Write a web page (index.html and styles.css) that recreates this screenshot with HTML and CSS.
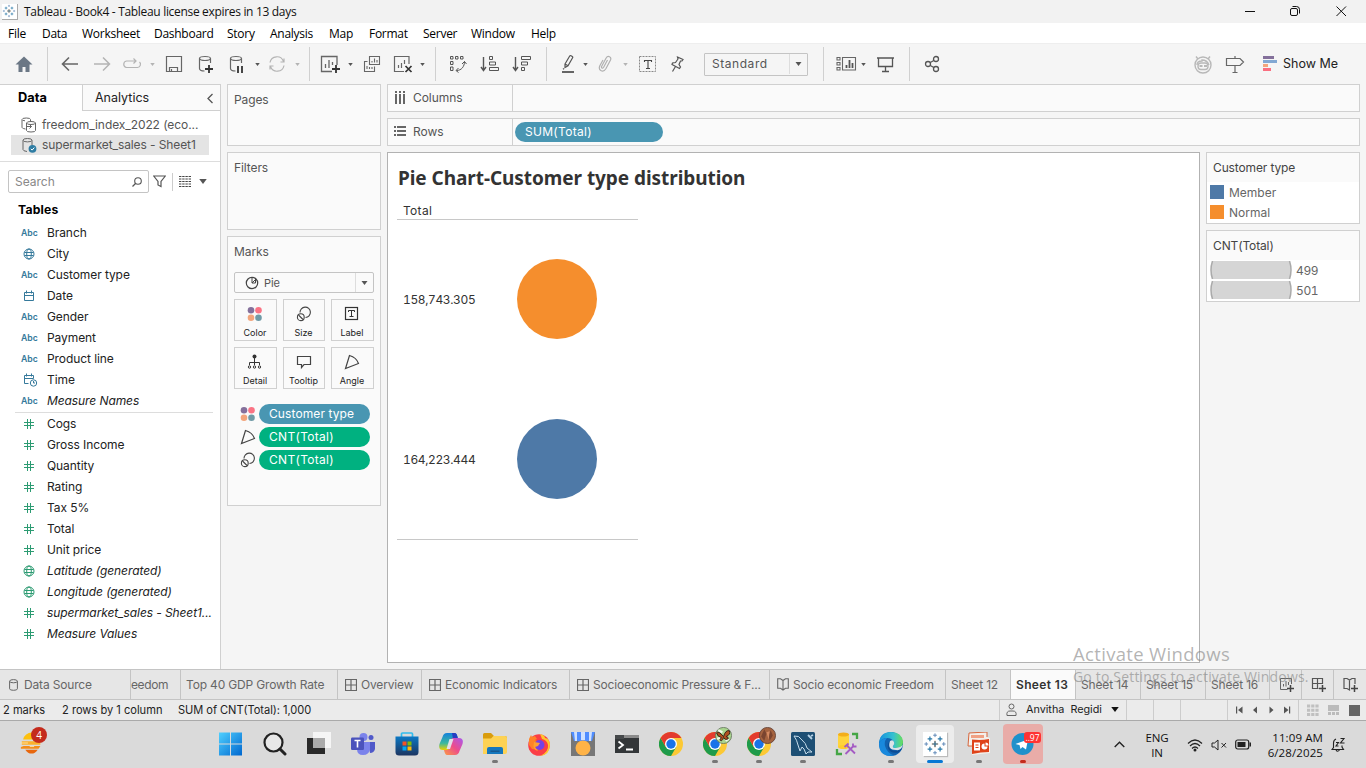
FILE: index.html
```html
<!DOCTYPE html>
<html lang="en">
<head>
<meta charset="utf-8">
<title>Tableau - Book4</title>
<link rel="stylesheet" href="styles.css">
</head>
<body>
<svg class="defs" width="0" height="0">
  <symbol id="tableau" viewBox="0 0 26 26"><path d="M13 9.500v7M9.500 13h7" stroke="#e0803a" stroke-width="1.300"/><path d="M13 1.500v4M11 3.500h4M13 20.500v4M11 22.500h4M1.500 13h4M3.500 11v4M20.500 13h4M22.500 11v4" stroke="#5b86b5" stroke-width="1"/><path d="M7.500 5v5M5 7.500h5M18.500 5v5M16 7.500h5M7.500 16v5M5 18.500h5M18.500 16v5M16 18.500h5M13 10v6M10 13h6" stroke="#2878a8" stroke-width="1.300"/></symbol>
  <symbol id="caret" viewBox="0 0 6 4"><path d="M0 0h6L3 4z" fill="currentColor"/></symbol>
  <symbol id="globe" viewBox="0 0 12 12"><g fill="none" stroke="currentColor"><circle cx="6" cy="6" r="5"/><ellipse cx="6" cy="6" rx="2.300" ry="5"/><path d="M1.500 4.500h9M1.500 7.500h9"/></g></symbol>
  <symbol id="hash" viewBox="0 0 12 12"><path d="M4.500 1v10M7.500 1v10M1 4.500h10M1 7.500h10" fill="none" stroke="currentColor"/></symbol>
  <symbol id="cyl" viewBox="0 0 14 18"><path d="M12.500 8V3.500M1.500 3.500v10c0 1.500 2 2.500 5 2.500" fill="none" stroke="currentColor" stroke-width="1.200"/><ellipse cx="7" cy="3.500" rx="5.500" ry="2" fill="none" stroke="currentColor" stroke-width="1.200"/></symbol>
  <symbol id="dots" viewBox="0 0 16 16"><circle cx="4" cy="4.200" r="3.300" fill="#84709b"/><circle cx="11.500" cy="4.200" r="3.300" fill="#fa7384"/><circle cx="4" cy="11.700" r="3.300" fill="#f2a57c"/><circle cx="11.500" cy="11.700" r="3.300" fill="#6f9aa6"/></symbol>
  <symbol id="size" viewBox="0 0 16 16"><g fill="none" stroke="#444" stroke-width="1.100"><path d="M4 6.500A5.200 5.200 0 1 1 9.500 11.500"/><circle cx="4.800" cy="11.200" r="3.400"/><path d="M2.500 9l4.500 4.500"/></g></symbol>
  <symbol id="angle" viewBox="0 0 16 16"><path d="M5.500 1.500L1.500 14.500L14.500 9.500Q12.500 3.500 5.500 1.500z" fill="none" stroke="#444" stroke-width="1.200"/></symbol>
  <symbol id="grid" viewBox="0 0 12 12"><path d="M.5.500h11v11H.5zM6 .5v11M.5 6h11" fill="none" stroke="currentColor" stroke-width="1.200"/></symbol>
  <symbol id="book" viewBox="0 0 12 13"><path d="M.7.700h2.800L6 2.500 8.500.700h2.800v9.600H8.500L6 12 3.500 10.300H.7zM6 2.500V12" fill="none" stroke="currentColor" stroke-width="1.100"/></symbol>
  <symbol id="chrome" viewBox="0 0 24 24"><circle cx="12" cy="12" r="12" fill="#fcc934"/><path d="M1.600 6A12 12 0 0 0 12 24L17.200 15H6.800z" fill="#1e9b4b"/><path d="M1.600 6A12 12 0 0 1 22.400 6H12L6.800 15z" fill="#e33b2e"/><circle cx="12" cy="12" r="6" fill="#fff"/><circle cx="12" cy="12" r="4.700" fill="#1a73e8"/></symbol>
</svg>

<header class="titlebar">
  <span class="app-logo"><svg width="14" height="14"><use href="#tableau"/></svg></span>
  <span class="title">Tableau - Book4 - Tableau license expires in 13 days</span>
  <svg class="win-buttons" width="104" height="22" viewBox="0 0 104 22"><g fill="none" stroke="#111"><path d="M0 10.500h10M91.500 5.500l9.500 9.500M101 5.500L91.500 15"/><rect x="45.500" y="7.500" width="7" height="7" rx="1.500"/><path d="M47.500 5.500h4a3 3 0 0 1 3 3v4"/></g></svg>
</header>

<nav class="menubar">
  <span>File</span><span>Data</span><span>Worksheet</span><span>Dashboard</span><span>Story</span><span>Analysis</span><span>Map</span><span>Format</span><span>Server</span><span>Window</span><span>Help</span>
</nav>

<div class="toolbar">
  <svg width="18" height="18" viewBox="0 0 18 18"><path d="M9 1.500L.5 9.500h3V17h4v-5h3v5h4V9.500h3z" fill="#6b7785"/></svg>
  <i class="sep first"></i>
  <svg width="18" height="16" viewBox="0 0 18 16"><path d="M17 8H2M8 1.500L1.500 8 8 14.500" fill="none" stroke="#666" stroke-width="1.600"/></svg>
  <svg width="18" height="16" viewBox="0 0 18 16"><path d="M1 8h15M10 1.500L16.500 8 10 14.500" fill="none" stroke="#b4b4b4" stroke-width="1.500"/></svg>
  <svg width="20" height="12" viewBox="0 0 20 12"><path d="M13.500 3H4.500a3.300 3.300 0 0 0 0 6.500h11a3.200 3.200 0 0 0 2-5.500M11.500.500L14 3l-2.500 2.500" fill="none" stroke="#b4b4b4" stroke-width="1.200"/></svg>
  <svg class="caret off"><use href="#caret"/></svg>
  <svg width="18" height="18" viewBox="0 0 18 18"><path d="M1.500 1.500h15v15h-15zM4.500 16.500v-4h8v4M6.500 16v-2" fill="none" stroke="#666" stroke-width="1.200"/></svg>
  <svg width="18" height="20" viewBox="0 0 18 20"><use href="#cyl" x="1" y="1" width="14" height="18" color="#666"/><path d="M12 11v8M8 15h8" stroke="#333" stroke-width="1.800"/></svg>
  <svg width="18" height="20" viewBox="0 0 18 20"><use href="#cyl" x="1" y="1" width="14" height="18" color="#666"/><path d="M10 12v7M14 12v7" stroke="#333" stroke-width="1.800"/></svg>
  <svg class="caret"><use href="#caret"/></svg>
  <svg width="18" height="18" viewBox="0 0 18 18"><path d="M2 7.500a7 7 0 0 1 13.500-1M16 10.500a7 7 0 0 1-13.500 1M12.500 7h3.500V3.500M5.500 11H2v3.500" fill="none" stroke="#b4b4b4" stroke-width="1.200"/></svg>
  <svg class="caret off"><use href="#caret"/></svg>
  <i class="sep"></i>
  <svg width="22" height="20" viewBox="0 0 22 20"><path d="M17 11V2.500H1.500v15H12M5.500 14v-4M9 14V6M12.500 11V8" fill="none" stroke="#666" stroke-width="1.300"/><path d="M16 11v8M12 15h8" stroke="#333" stroke-width="1.800"/></svg>
  <svg class="caret"><use href="#caret"/></svg>
  <svg width="18" height="18" viewBox="0 0 18 18"><path d="M6.500 1.500h10v8h-10zM4.500 6.500h-3v10h10v-5M9 7.500V6M11.500 7.500v-4M14 7.500V5M4 14v-3M6.500 14v-2M9 14v-2" fill="none" stroke="#666" stroke-width="1.100"/></svg>
  <svg width="20" height="20" viewBox="0 0 20 20"><path d="M16 10V2.500H1.500v15H11M5.500 14v-3M8.500 14V9M11.500 10V6" fill="none" stroke="#666" stroke-width="1.200"/><path d="M12.500 12l6 6M18.500 12l-6 6" stroke="#333" stroke-width="1.700"/></svg>
  <svg class="caret"><use href="#caret"/></svg>
  <i class="sep"></i>
  <svg width="18" height="18" viewBox="0 0 18 18"><path d="M1.500 1.500h2.500v2.500H1.500zM6.500 1.500h2.500v2.500H6.500zM11.500 1.500h2.500v2.500h-2.500zM1.500 6.500h2.500v3H1.500zM1.500 12h2.500v3.500H1.500zM15.500 6.500c0 5-3 9-8 9M13 9l2.500-2.500L17.500 9M9.500 13L7 15.500 9.500 17.500" fill="none" stroke="#555"/></svg>
  <svg width="20" height="18" viewBox="0 0 20 18"><path d="M3.500 2v13M1 12l2.500 3.500L6 12" fill="none" stroke="#555" stroke-width="1.400"/><path d="M9.500 1.500h3v3h-3zM9.500 7h6v3h-6zM9.500 12.500h9v3h-9z" fill="none" stroke="#555"/></svg>
  <svg width="20" height="18" viewBox="0 0 20 18"><path d="M3.500 2v13M1 12l2.500 3.500L6 12" fill="none" stroke="#555" stroke-width="1.400"/><path d="M9.500 1.500h9v3h-9zM9.500 7h6v3h-6zM9.500 12.500h3v3h-3z" fill="none" stroke="#555"/></svg>
  <i class="sep"></i>
  <svg width="14" height="20" viewBox="0 0 14 20"><path d="M4 10L8.700 2q.5-.8 1.300-.3l1.300.8q.8.500.3 1.300L7 11.800 4 13.500zM4 10l3 1.800M3 14.500l-1 .8" fill="none" stroke="#555" stroke-width="1.200"/><path d="M1 18h12" stroke="#555" stroke-width="1.800"/></svg>
  <svg class="caret"><use href="#caret"/></svg>
  <svg width="14" height="18" viewBox="0 0 14 18"><path d="M9.500 5L5.500 12.500q-.8 1-1.600.4t-.2-1.700L8 3.200Q9.500.700 11.500 1.700t1 3.300L8 13.500Q6 17 3.200 15.700T1.700 11L5 5" fill="none" stroke="#b0b0b0" stroke-width="1.200"/></svg>
  <svg class="caret off"><use href="#caret"/></svg>
  <svg width="18" height="17" viewBox="0 0 18 17"><rect x=".5" y=".5" width="16" height="15" fill="none" stroke="#888" stroke-dasharray="2 1"/><path d="M5.500 6V4.500h7V6M9 4.500v8M7 12.500h4" fill="none" stroke="#444" stroke-width="1.100"/></svg>
  <svg width="14" height="18" viewBox="0 0 14 18"><path d="M7.500 2l5.500 2.500-1 1.500H10.500L9 9.500l1.500 2.500-1 1.500L2 9.500l.5-1.500L5.500 7.500 8 4zM5.500 11.500L2.500 16.500" fill="none" stroke="#555" stroke-width="1.200"/></svg>
  <div class="fit-select"><span>Standard</span><b><svg class="caret"><use href="#caret"/></svg></b></div>
  <i class="sep"></i>
  <svg width="21" height="16" viewBox="0 0 21 16"><path d="M1 1.500h3V4H1zM1 6.500h3V9H1zM1 11.500h3V14H1zM6.500 1.500h13v12.500h-13z" fill="none" stroke="#666" stroke-width="1.100"/><path d="M10.500 12V9M13.500 12V4M16.500 12V7" stroke="#555" stroke-width="1.800"/></svg>
  <svg class="caret"><use href="#caret"/></svg>
  <svg width="18" height="17" viewBox="0 0 18 17"><path d="M0 2h17M1.500 2v8.500h14V2M8.500 10.500V15M5 15.500h7" fill="none" stroke="#555" stroke-width="1.300"/></svg>
  <i class="sep"></i>
  <svg width="16" height="18" viewBox="0 0 16 18"><g fill="none" stroke="#555" stroke-width="1.300"><circle cx="4" cy="9" r="2.500"/><circle cx="12" cy="4" r="2.500"/><circle cx="12" cy="14" r="2.500"/><path d="M6.300 7.500l3.500-2M6.300 10.500l3.500 2"/></g></svg>
  <i></i>
  <svg width="20" height="20" viewBox="0 0 20 20"><g fill="none" stroke="#b8b8b8" stroke-width="1.400"><circle cx="10" cy="11" r="8"/><path d="M5 5L3 2.500M15 5l2-2.500"/><path d="M4 11q0-4 5-4v-1q5 0 7 5"/><rect x="5" y="9" width="10" height="6.500" rx="3"/><path d="M6.500 12h3M11 12h3" stroke-width="2"/></g></svg>
  <svg width="20" height="20" viewBox="0 0 20 20"><path d="M1.500 4.500h13.500l3.500 3.500-3.500 3.500H1.500zM10 2v2.500M10 11.500V18M7.500 18.500h5" fill="none" stroke="#666" stroke-width="1.200"/></svg>
  <div class="show-me"><svg width="14" height="15" viewBox="0 0 14 15"><path d="M0 0h11v3H0z" fill="#84709b"/><path d="M0 4h14v3H0z" fill="#82a8d3"/><path d="M0 8h5v3H0z" fill="#f2a57c"/><path d="M0 12h8v3H0z" fill="#fa6f80"/></svg><span>Show Me</span></div>
</div>

<main class="workspace">
  <aside class="data-pane">
    <div class="pane-tabs"><b>Data</b><span>Analytics</span><svg width="8" height="11" viewBox="0 0 8 11"><path d="M6.500 1L2 5.500l4.500 4.500" fill="none" stroke="#555" stroke-width="1.300"/></svg></div>
    <div class="sources">
      <div class="source"><svg width="16" height="16" viewBox="0 0 16 16"><path d="M4.500 12C1.500 11.500 1 11 1 10V3M9.500 4V2.500M1 2.500q0-1.500 4.300-1.500T9.500 2.500M1 2.500q0 1 3 1.300M5.500 6v7.500q0 1.500 4.500 1.500t4.500-1.500V6M6 9.500h4.500M8.500 7.500l2 2-2 2" fill="none" stroke="#666"/><ellipse cx="10" cy="6" rx="4.500" ry="1.500" fill="none" stroke="#666"/></svg><span class="src-a">freedom_index_2022 (eco...</span></div>
      <div class="source on"><svg width="16" height="16" viewBox="0 0 16 16"><path d="M2 3.500v9Q2 14 6 14.500M11 3.500v5" fill="none" stroke="#666"/><ellipse cx="6.500" cy="3.200" rx="4.500" ry="1.700" fill="none" stroke="#666"/><circle cx="11.500" cy="11.800" r="3.900" fill="#2e7ca3"/><path d="M9.800 11.800l1.300 1.300 2.200-2.500" fill="none" stroke="#fff"/></svg><span class="src-b">supermarket_sales - Sheet1</span></div>
    </div>
    <div class="search-row">
      <div class="search"><span>Search</span><svg width="12" height="12" viewBox="0 0 12 12"><circle cx="7" cy="5" r="3.300" fill="none" stroke="#555" stroke-width="1.100"/><path d="M4.500 7.500L1.500 10.500" stroke="#555" stroke-width="1.300"/></svg></div>
      <svg width="13" height="13" viewBox="0 0 13 13"><path d="M.7 1h11.600L8 6.500v5L5 10V6.500z" fill="none" stroke="#555" stroke-width="1.200"/></svg>
      <i></i>
      <svg width="12" height="11" viewBox="0 0 12 11"><path d="M0 .5h12M0 3h12M0 5.500h12M0 8h12M0 10.500h12" stroke="#444" stroke-width="1.200" stroke-dasharray="2.400 .8"/></svg>
      <svg class="caret big"><use href="#caret"/></svg>
    </div>
    <h2>Tables</h2>
    <ul class="fields dims">
      <li><em>Abc</em><span>Branch</span></li>
      <li><svg><use href="#globe"/></svg><span>City</span></li>
      <li><em>Abc</em><span>Customer type</span></li>
      <li><svg viewBox="0 0 12 12"><path d="M1.500 2.500h9v8h-9zM1.500 5.500h9M3.500 .5v3M8.500 .5v3" fill="none" stroke="currentColor"/></svg><span>Date</span></li>
      <li><em>Abc</em><span>Gender</span></li>
      <li><em>Abc</em><span>Payment</span></li>
      <li><em>Abc</em><span>Product line</span></li>
      <li><svg class="time" viewBox="0 0 15 14"><path d="M5.500 10.500h-4v-8h9v3M1.500 5.500h9M3.500 .5v3M8.500 .5v3" fill="none" stroke="currentColor"/><circle cx="10.500" cy="10" r="3.200" fill="#fff" stroke="currentColor"/><path d="M10.500 8v2h1.500" fill="none" stroke="currentColor"/></svg><span>Time</span></li>
      <li class="gen"><em>Abc</em><span>Measure Names</span></li>
    </ul>
    <ul class="fields meas">
      <li><svg><use href="#hash"/></svg><span>Cogs</span></li>
      <li><svg><use href="#hash"/></svg><span>Gross Income</span></li>
      <li><svg><use href="#hash"/></svg><span>Quantity</span></li>
      <li><svg><use href="#hash"/></svg><span>Rating</span></li>
      <li><svg><use href="#hash"/></svg><span>Tax 5%</span></li>
      <li><svg><use href="#hash"/></svg><span>Total</span></li>
      <li><svg><use href="#hash"/></svg><span>Unit price</span></li>
      <li class="gen"><svg><use href="#globe"/></svg><span>Latitude (generated)</span></li>
      <li class="gen"><svg><use href="#globe"/></svg><span>Longitude (generated)</span></li>
      <li class="gen"><svg><use href="#hash"/></svg><span>supermarket_sales - Sheet1...</span></li>
      <li class="gen"><svg><use href="#hash"/></svg><span>Measure Values</span></li>
    </ul>
  </aside>

  <section class="cards">
    <div class="card pages">Pages</div>
    <div class="card filters">Filters</div>
    <div class="card marks">
      <h3>Marks</h3>
      <div class="mark-type"><svg width="14" height="14" viewBox="0 0 14 14"><circle cx="7" cy="7" r="5.700" fill="none" stroke="#444" stroke-width="1.200"/><path d="M7 1.500V7l4-4M7 7h3.500V4" fill="none" stroke="#444" stroke-width="1"/></svg><span>Pie</span><b><svg class="caret"><use href="#caret"/></svg></b></div>
      <div class="mark-grid">
        <div><svg><use href="#dots"/></svg>Color</div>
        <div><svg><use href="#size"/></svg>Size</div>
        <div><svg viewBox="0 0 16 16"><rect x="1.500" y="1.500" width="12" height="12" fill="none" stroke="#333" stroke-width="1.200"/><path d="M4.500 6V4.500h6V6M7.500 4.500v6M5.500 10.500h4" fill="none" stroke="#333"/></svg>Label</div>
        <div><svg viewBox="0 0 16 16"><circle cx="7.500" cy="2.500" r="2" fill="#333"/><path d="M7.500 4v7M2.500 11V8.500h10v2.500" fill="none" stroke="#333"/><g fill="none" stroke="#333"><circle cx="2.500" cy="13" r="1.200"/><circle cx="7.500" cy="13" r="1.200"/><circle cx="12.500" cy="13" r="1.200"/></g></svg>Detail</div>
        <div><svg viewBox="0 0 16 16"><path d="M1.500 2.500h13v8H8L5.500 13.500v-3h-4z" fill="none" stroke="#444" stroke-width="1.200"/></svg>Tooltip</div>
        <div><svg><use href="#angle"/></svg>Angle</div>
      </div>
      <div class="encodings">
        <div><svg><use href="#dots"/></svg><span class="pill blue">Customer type</span></div>
        <div><svg><use href="#angle"/></svg><span class="pill green">CNT(Total)</span></div>
        <div><svg><use href="#size"/></svg><span class="pill green">CNT(Total)</span></div>
      </div>
    </div>
  </section>

  <section class="sheet">
    <div class="shelf"><div class="shelf-name"><svg width="12" height="13" viewBox="0 0 12 13"><path d="M2 0v2M6 0v2M10 0v2M2 3v10M6 3v10M10 3v10" stroke="#666" stroke-width="2"/></svg>Columns</div></div>
    <div class="shelf"><div class="shelf-name"><svg width="12" height="11" viewBox="0 0 12 11"><path d="M0 1h2M0 5h2M0 9h2M3 1h9M3 5h9M3 9h9" stroke="#666" stroke-width="2"/></svg>Rows</div><span class="pill blue wide">SUM(Total)</span></div>
    <div class="view-row">
      <div class="view">
        <h1>Pie Chart-Customer type distribution</h1>
        <div class="chart">
          <div class="chart-head">Total</div>
          <div class="chart-row"><span>158,743.305</span><i class="pie normal"></i></div>
          <div class="chart-row"><span>164,223.444</span><i class="pie member"></i></div>
        </div>
      </div>
      <div class="legends">
        <div class="legend"><h4>Customer type</h4>
          <div><i class="swatch member"></i>Member</div><div><i class="swatch normal"></i>Normal</div></div>
        <div class="legend sizes"><h4>CNT(Total)</h4>
          <div><svg width="82" height="18" viewBox="0 0 82 18"><path d="M2.500 0h77q2.500 9 0 18h-77q-3-9 0-18" fill="#d5d5d5"/><path d="M2.500 0q-3 9 0 18M79.500 0q3 9 0 18" fill="none" stroke="#aaa" stroke-width="1.500"/></svg>499</div>
          <div><svg width="82" height="18" viewBox="0 0 82 18"><path d="M2.500 0h77q2.500 9 0 18h-77q-3-9 0-18" fill="#d5d5d5"/><path d="M2.500 0q-3 9 0 18M79.500 0q3 9 0 18" fill="none" stroke="#aaa" stroke-width="1.500"/></svg>501</div></div>
      </div>
    </div>
  </section>
</main>

<nav class="sheet-tabs">
  <div class="t-source"><svg width="9" height="12" viewBox="0 0 9 12"><path d="M.6 2.300v7.500q0 1.500 3.900 1.500t3.900-1.500V2.300" fill="none" stroke="#666"/><ellipse cx="4.500" cy="2.200" rx="3.900" ry="1.600" fill="none" stroke="#666"/></svg><span>Data Source</span></div>
  <div class="t-cut"><span>eedom</span></div>
  <div class="t-top"><span>Top 40 GDP Growth Rate</span></div>
  <div class="t-icon"><svg width="12" height="12"><use href="#grid"/></svg><span>Overview</span></div>
  <div class="t-icon"><svg width="12" height="12"><use href="#grid"/></svg><span>Economic Indicators</span></div>
  <div class="t-icon"><svg width="12" height="12"><use href="#grid"/></svg><span>Socioeconomic Pressure &amp; F...</span></div>
  <div class="t-icon"><svg width="12" height="13"><use href="#book"/></svg><span>Socio economic Freedom</span></div>
  <div><span>Sheet 12</span></div>
  <div class="active"><span>Sheet 13</span></div>
  <div><span>Sheet 14</span></div>
  <div><span>Sheet 15</span></div>
  <div><span>Sheet 16</span></div>
  <div class="t-new"><svg width="16" height="16" viewBox="0 0 16 16"><path d="M12.500 7V1.500H1.500v11h7M4.500 9.500V7M7 9.500V4M9.500 8V5" fill="none" stroke="#666"/><path d="M11.500 8v7M8 11.500h7" stroke="#444" stroke-width="1.500"/></svg></div>
  <div class="t-new"><svg width="16" height="16" viewBox="0 0 16 16"><path d="M11.500 7V1.500h-10v10h6M6.500 1.500v10M1.500 6.500h10" fill="none" stroke="#555" stroke-width="1.200"/><path d="M11.500 8v7M8 11.500h7" stroke="#444" stroke-width="1.500"/></svg></div>
  <div class="t-new"><svg width="16" height="16" viewBox="0 0 16 16"><path d="M12 7V1.500H9L6.500 3 4 1.500H1v10h3L6.500 13V3" fill="none" stroke="#555" stroke-width="1.200"/><path d="M11.500 8v7M8 11.500h7" stroke="#444" stroke-width="1.500"/></svg></div>
</nav>

<footer class="status">
  <span>2 marks</span><span>2 rows by 1 column</span><span class="s-sum">SUM of CNT(Total): 1,000</span>
  <div class="user"><svg width="11" height="14" viewBox="0 0 11 14"><circle cx="5.500" cy="3.500" r="2.500" fill="none" stroke="#666"/><path d="M1 12.500q-.8-4.500 3-4.500h3q3.800 0 3 4.500z" fill="none" stroke="#666"/></svg><span>Anvitha&nbsp; Regidi</span><svg class="caret big dark"><use href="#caret"/></svg></div>
  <i class="cell"></i><i class="cell"></i><i class="cell"></i>
  <div class="pager"><svg width="56" height="8" viewBox="0 0 56 8"><path d="M0 .5h1.200v7H0zM6.500 .5v7L2 4zM21 .500v7L17 4zM33.500 .5v7L37.500 4zM48 .500v7L52.500 4zM53 .5h1.200v7H53z" fill="#555"/></svg></div>
  <div class="views"><svg width="55" height="12" viewBox="0 0 55 12"><path d="M0 2h12M0 6.200h12M0 10.400h12" stroke="#c0c0c0" stroke-width="3" stroke-dasharray="3.200 1"/><path d="M21 1h11v6H21zM21 8h3v3h-3zM25 8h3v3h-3zM29 8h3v3h-3z" fill="#bbb"/><path d="M42 1h11v11H42z" fill="#666"/></svg></div>
</footer>

<div class="taskbar">
  <div class="widget"><svg width="23" height="22" viewBox="0 0 26 24"><path d="M3.500 8A10 10 0 0 1 23 8z" fill="#fdc00d"/><path d="M2 10h21v4H2z" fill="#fbb02d"/><path d="M4 15.500h19l-2 3H1v-2z" fill="#f28c1b"/><path d="M6 19.500h14q-3 4.500-7 4.500t-7-4.500" fill="#e8670d"/><path d="M0 12h9M11 16h5" stroke="#ffe5a8"/></svg><b>4</b></div>
  <div class="apps">
    <div><svg viewBox="0 0 24 24"><defs><linearGradient id="wg" x2="1" y2="1"><stop stop-color="#4fd0ff"/><stop offset="1" stop-color="#0067cf"/></linearGradient></defs><path d="M0 .500h11v11H0zM12 .500h11v11H12zM0 12.500h11v11H0zM12 12.500h11v11H12z" fill="url(#wg)"/></svg></div>
    <div><svg viewBox="0 0 24 24"><circle cx="10.500" cy="10.500" r="9" fill="#e8e8e8" stroke="#222" stroke-width="2.200"/><path d="M17 17l5 5" stroke="#222" stroke-width="3" stroke-linecap="round"/></svg></div>
    <div><svg viewBox="0 0 24 24"><path d="M6 0h18v16H6z" fill="#f5f5f5"/><path d="M0 6h18v16H0z" fill="#292929"/><path d="M6 6h12v10H6z" fill="#aaa"/></svg></div>
    <div><svg viewBox="0 0 24 24"><circle cx="12.500" cy="5" r="4" fill="#7b83eb"/><circle cx="20" cy="5.500" r="2.500" fill="#5059c9"/><path d="M17 10h7v7q-1 4-5 4z" fill="#5059c9"/><path d="M6 10h13v7q-1 6-7 6t-6-6z" fill="#7b83eb"/><rect y="5.500" width="13" height="12.500" rx="1.200" fill="#4b53bc"/><path d="M3.500 8.500h6M6.500 8.500v7" stroke="#fff" stroke-width="1.600"/></svg></div>
    <div><svg viewBox="0 0 24 24"><defs><linearGradient id="sg" x2="0" y2="1"><stop stop-color="#0b78c4"/><stop offset="1" stop-color="#1d3560"/></linearGradient></defs><path d="M6.500 5V2q0-1 1-1h9q1 0 1 1v3" fill="none" stroke="#30bced" stroke-width="1.700"/><path d="M.5 4.500h23V20q0 3.500-3.500 3.500H4Q.5 23.500.5 20z" fill="url(#sg)"/><path d="M7.500 9.500h4v4h-4z" fill="#f35325"/><path d="M12.500 9.500h4v4h-4z" fill="#81bc06"/><path d="M7.500 14.500h4v4h-4z" fill="#05a6f0"/><path d="M12.500 14.500h4v4h-4z" fill="#ffba08"/></svg></div>
    <div><svg viewBox="0 0 24 24"><defs><linearGradient id="cp1" x2="0" y2="1"><stop stop-color="#1481dc"/><stop offset=".6" stop-color="#3bb89f"/><stop offset="1" stop-color="#eed000"/></linearGradient><linearGradient id="cp2" x1="1" x2="0" y2="1"><stop stop-color="#a858ef"/><stop offset=".5" stop-color="#ed4c8b"/><stop offset="1" stop-color="#fb9b45"/></linearGradient></defs><path d="M8 1h8q2 0 3 6h-4L11 18H4Q-1 18 .5 12L3.500 5q1-4 4.500-4" fill="url(#cp1)"/><path d="M13 1h3q2 0 3 6h-5z" fill="#263ec2"/><path d="M16 23H8q-2 0-3-5h4l4-12h7q5 0 3.500 6l-3 7q-1 4-4.500 4" fill="url(#cp2)"/><path d="M10.500 7h4l-3.500 10H7.500z" fill="#e2e0e8"/></svg></div>
    <div class="run"><svg viewBox="0 0 24 24"><path d="M0 2.500q0-1.500 1.500-1.500H8l3 3h11q2 0 2 2V9H0z" fill="#d99c0d"/><path d="M0 6.500h8L10.500 4H22q2 0 2 2v14q0 2-2 2H0z" fill="#fdd254"/><path d="M4 22v-5q0-2 2-2h12q2 0 2 2v5z" fill="#1577bd"/><path d="M7.500 18.500h9v1.500h-9z" fill="#17588f"/></svg></div>
    <div><svg viewBox="0 0 24 24"><circle cx="12" cy="13" r="10.800" fill="#fb3e46"/><path d="M13 2q5 1 5 4 4 0 5 6 0 11-10 12 9-4 8-11-1-5-6-6-1-3-2-5" fill="#ffc62c"/><path d="M2 7l2-4 1 2 3-1 2 3-2 1 6 3-3 7-6-1-3-4z" fill="#ff8227"/><circle cx="12.500" cy="13" r="5" fill="#7542e5"/><path d="M7 10l6 1-2 3-3 1 3 4q-6-1-4-9" fill="#ffa02f"/></svg></div>
    <div><svg viewBox="0 0 24 24"><path d="M0 0h24v24H0z" fill="#777"/><path d="M0 0h24l-3 9h-5l-1 1H9L8 9H3z" fill="#4f8dff"/><path d="M3 0h3v9H4zM10 0h4v8h-4zM18 0h3l-1 9h-2z" fill="#cfe1ff"/><circle cx="12" cy="16" r="7.500" fill="#ffb347"/></svg></div>
    <div><svg viewBox="0 0 24 24"><path d="M0 3h24v18H0z" fill="#333638"/><path d="M0 3h24v3H0z" fill="#8b8b8b"/><path d="M0 3h9v4H0z" fill="#45484a"/><path d="M3.500 9.500l4.500 3.500-4.500 3.500M11 17.500h7" fill="none" stroke="#fff" stroke-width="1.800"/></svg></div>
    <div><svg viewBox="0 0 24 24"><use href="#chrome"/></svg></div>
    <div class="run"><svg viewBox="0 0 24 24"><use href="#chrome"/></svg><svg class="avatar" viewBox="0 0 16 16"><circle cx="8" cy="8" r="7.600" fill="#a9d58f" stroke="#66755e" stroke-width=".8"/><path d="M3 3l4 2M2 11l4-1M10 13l3-2" stroke="#f2f8ec" stroke-width="2"/><path d="M8 9Q3 3 1.500 5.500 2 9 6 10 3.500 12.500 6 13 7.500 12 8 10q2 3 4.500 1Q13 9.500 10.500 9 15 7 13.500 3.500 10 2.500 8 9" fill="#b0501f" stroke="#332217" stroke-width=".9"/></svg></div>
    <div class="run"><svg viewBox="0 0 24 24"><use href="#chrome"/></svg><svg class="avatar" viewBox="0 0 16 16"><circle cx="8" cy="8" r="7.600" fill="#a5633f" stroke="#624035" stroke-width=".8"/><path d="M5 2l2 4-2 7-3-4zM11 3l2 5-3 5-1-5z" fill="#7a4530"/><path d="M7 5l3-1-1 8z" fill="#d58b62"/></svg></div>
    <div class="run"><svg viewBox="0 0 24 24"><rect width="24" height="24" rx="1.500" fill="#1d4f74"/><path d="M3 4q5-1 8 4 4 3 5 8l5 4h-4l-2 2-2-5-2-2-2 4-2-6q-1-5-4-9z" fill="none" stroke="#c5dceb" stroke-width="1"/><path d="M17 3l4 4M20 4l2-1" stroke="#b6d2e6" stroke-width="1.800"/></svg></div>
    <div><svg viewBox="0 0 24 24"><path d="M3 2h11v13H3z" fill="#ffd43c"/><ellipse cx="8.500" cy="2.500" rx="5.500" ry="2" fill="#f3ae1b"/><ellipse cx="8.500" cy="15" rx="5.500" ry="2" fill="#ffcd2d"/><path d="M17 2h5v5M2 17v5h5" fill="none" stroke="#45a646" stroke-width="2.300"/><path d="M11.500 13l8.500 8.500M19 13.500L10.500 22M18 11.500v3h3.500M9.500 15l4-3.500" fill="none" stroke="#a45bc3" stroke-width="1.800"/></svg></div>
    <div class="run"><svg viewBox="0 0 24 24"><defs><linearGradient id="eg" x2="1"><stop stop-color="#1490df"/><stop offset=".6" stop-color="#35c1d0"/><stop offset="1" stop-color="#69df59"/></linearGradient></defs><circle cx="12" cy="12" r="12" fill="#1263b0"/><path d="M0 11Q1 0 12 0t12 10q0 6-7 6-4 0-3-2 2-2 1-4-2-4-7-4Q3 6 0 11" fill="url(#eg)"/><path d="M0 11Q3 6 8 6q-3 3-2 8 2 7 9 9.500Q0 26 0 11" fill="#1989dd"/><path d="M11 9q-3 5 1 8.500 5 3 11-1-2 3-3.500 4Q11 22 9 16q-1-4 2-7" fill="#0d4c94"/><path d="M11 9q3-2 4 1 1 2-1 4-1 2 3 2 4 0 7-3-2 6-7 5-9 0-6-9" fill="#dbe3e7"/></svg></div>
    <div class="run current"><span class="tile"><svg viewBox="0 0 26 26"><use href="#tableau"/></svg></span></div>
    <div class="run"><svg viewBox="0 0 24 24"><path d="M2 1l18-1v5l3 1v15q-10 1-18 2V14H1z" fill="#f4f0eb"/><path d="M2 1l18-1v5M2 1L1 14h4" fill="none" stroke="#d6663d"/><path d="M4 3h13v3H4z" fill="#f0a184"/><path d="M5 7.500q9 1 17-.5v13q-8 0-17 2z" fill="#df431a"/><rect x="7" y="10.500" width="6" height="8" fill="#fff"/><path d="M8.500 13h3M8.500 15.500h3" stroke="#df431a"/><path d="M17.500 11.500a3 3 0 1 0 3 3h-3z" fill="#fff"/><path d="M18.500 10.500a3 3 0 0 1 3 3h-3z" fill="#fff"/></svg></div>
    <div class="run alert"><svg viewBox="0 0 24 24"><circle cx="11.500" cy="12" r="11" fill="#2091cb"/><path d="M4.500 12L17 7.500 15 17.500l-3.500-2.500-2 2-1-4z" fill="#fff"/></svg><b>..97</b></div>
  </div>
  <div class="tray">
    <svg class="chev" width="11" height="7" viewBox="0 0 11 7"><path d="M.7 6L5.500 1.200 10.300 6" fill="none" stroke="#222" stroke-width="1.400"/></svg>
    <div class="lang">ENG<br>IN</div>
    <svg class="wifi" width="16" height="14" viewBox="0 0 16 14"><path d="M1 5.500q7-7 14 0M3 8q5-5 10 0M5 10.500q3-3 6 0" fill="none" stroke="#222" stroke-width="1.200"/><circle cx="8" cy="12" r="1.500" fill="#222"/></svg>
    <svg class="vol" width="16" height="12" viewBox="0 0 16 12"><path d="M1 4h2.500L7 1v10L3.500 8H1zM10.500 4l4.500 4.500M15 4l-4.500 4.500" fill="none" stroke="#222"/></svg>
    <svg class="bat" width="17" height="11" viewBox="0 0 17 11"><rect x=".7" y="1" width="13" height="9" rx="2" fill="none" stroke="#222" stroke-width="1.200"/><path d="M2.500 3h8v5h-8zM14.500 3.500h1.500v4h-1.500z" fill="#222"/></svg>
    <div class="clock">11:09 AM<br>6/28/2025</div>
    <svg class="bell" width="15" height="16" viewBox="0 0 15 16"><path d="M5 2Q2.500 3 2.500 6v4.500L1 12.500h11.500L11 10V8.500M5 13q1.500 2.500 3.500 0M5 5.500h2.500L5 9h2.500M9.500 1.500h3.500L9.500 6h4" fill="none" stroke="#222" stroke-width="1.100"/></svg>
  </div>
</div>

<div class="watermark"><p>Activate Windows</p><span>Go to Settings to activate Windows.</span></div>
</body>
</html>
```
FILE: styles.css
```css
* { box-sizing: border-box; }
body { margin: 0; width: 1366px; height: 768px; overflow: hidden; position: relative; display: grid; grid-template-rows: 23px 20px 41px 585px 31px 21px 47px; background: #f5f5f5; color: #222; font-family: Inter, "Noto Sans", sans-serif; font-size: 12px; white-space: nowrap; }
svg { flex: none; display: block; }
h1, h2, h3, h4, p, ul { margin: 0; padding: 0; }
i, em { font-style: normal; }
.defs { position: absolute; }
.caret { width: 5px; height: 3px; color: #555; }
.caret.off { color: #b4b4b4; }
.caret.big { width: 8px; height: 5px; }
.caret.dark { color: #111; }

.titlebar { display: flex; align-items: center; background: #f2f2f2; padding-left: 2px; color: #111; font-family: "Open Sans", sans-serif; font-size: 12px; }
.app-logo { width: 16px; height: 16px; background: #fff; border-right: 1px solid #aaa; border-bottom: 1px solid #aaa; margin-right: 6px; }
.title { letter-spacing: -.32px; }
.win-buttons { margin-left: auto; margin-right: 17px; }

.menubar { display: grid; grid-template-columns: 34px 40px 72px 73px 43px 59px 40px 54px 48px 60px auto; align-items: center; justify-content: start; padding-left: 8px; background: #fff; color: #000; font-family: "Open Sans", sans-serif; font-size: 12px; letter-spacing: -.27px; }

.toolbar { display: grid; align-items: center; justify-items: center; border-top: 1px solid #eee; background: #f5f5f5; grid-template-columns: 47px 7px 32px 32px 28px 12px 32px 32px 30px 10px 30px 10px 15px 28px 11px 32px 30px 9px 16px 29px 36px 28px 20px 24px 10px 30px 10px 36px 22px 127px 17px 28px 6px 40px 7px 38px 1fr 32px 32px 115px; }
.sep { width: 1px; height: 34px; background: #d0d0d0; }
.sep.first { justify-self: start; }
.fit-select { justify-self: start; margin-left: 16px; width: 104px; height: 23px; border: 1px solid #c4c4c4; border-radius: 1px; display: flex; align-items: center; font-size: 12px; color: #555; padding-left: 7px; padding-bottom: 1px; letter-spacing: .55px; }
.fit-select b, .mark-type b { margin-left: auto; width: 18px; height: 100%; border-left: 1px solid #ddd; display: grid; place-items: center; }
.fit-select .caret, .mark-type .caret { width: 7px; height: 4px; }
.show-me { justify-self: start; padding-left: 12px; padding-bottom: 1px; display: flex; align-items: center; gap: 6px; font-size: 12.500px; }

.workspace { display: grid; grid-template-columns: 221px 154px 973px; column-gap: 6px; min-height: 0; }
.data-pane { background: #fff; border-top: 1px solid #d0d0d0; border-right: 1px solid #d0d0d0; }
.pane-tabs { display: flex; height: 26px; align-items: center; font-size: 12.500px; }
.pane-tabs b { width: 82px; padding-left: 18px; font-size: 12.800px; color: #000; padding-bottom: 1px; }
.pane-tabs span { flex: 1; height: 26px; line-height: 25px; padding-left: 12px; margin-right: -14px; background: #fafafa; border-left: 1px solid #d0d0d0; border-bottom: 1px solid #d0d0d0; }
.pane-tabs svg { margin-right: 6px; position: relative; }
.sources { padding: 4px 11px 6px; border-bottom: 1px solid #ddd; height: 51px; }
.source { display: flex; align-items: center; height: 20px; padding-left: 10px; gap: 5px; color: #555; font-size: 12px; }
.source span { padding-bottom: 2px; }
.source.on { background: #e4e4e4; }
.src-a { letter-spacing: -.08px; }
.src-b { letter-spacing: -.1px; }
.search-row { display: flex; align-items: center; padding: 8px 0 0 8px; }
.search { display: flex; align-items: center; justify-content: space-between; width: 141px; height: 23px; border: 1px solid #c4c4c4; border-radius: 2px; padding: 0 5px 0 6px; color: #888; margin-right: 4px; }
.search-row i { width: 1px; height: 18px; background: #ccc; margin: 0 6px; }
.search-row .caret { margin-left: 8px; }
.data-pane h2 { font-size: 12.200px; color: #000; padding-left: 18px; height: 29px; line-height: 34px; letter-spacing: .2px; }
.fields { list-style: none; }
.fields li { display: flex; align-items: center; height: 21px; color: #222; letter-spacing: -.08px; }
.fields svg, .fields em { flex: none; width: 12px; height: 12px; margin-left: 23px; margin-right: 12px; }
.fields em { width: 18px; margin-left: 21px; margin-right: 8px; font-size: 8.700px; line-height: 13px; font-weight: 600; font-style: normal; letter-spacing: 0; }
.fields .time { width: 15px; height: 14px; margin-right: 9px; }
.dims em, .dims svg { color: #35799b; }
.meas svg { color: #2c9b72; }
.meas { margin-top: 1px; }
.dims::after { content: ""; display: block; margin: 1px 7px -1px 15px; height: 1px; background: #ddd; }
.fields .gen { font-style: italic; letter-spacing: -.09px; }

.cards { display: flex; flex-direction: column; gap: 6px; }
.card { background: #fafafa; border: 1px solid #d0d0d0; padding: 7px 6px; line-height: 16px; color: #555; letter-spacing: -.1px; }
.pages { height: 62px; }
.filters { height: 78px; }
.marks { height: 270px; }
.card h3 { font-size: 12px; font-weight: 400; }
.mark-type { margin-top: 12px; height: 21px; width: 140px; border: 1px solid #c4c4c4; border-radius: 2px; display: flex; align-items: center; padding-left: 10px; gap: 5px; font-size: 11px; color: #555; }
.mark-grid { margin-top: 6px; display: grid; grid-template-columns: 43px 42px 43px; gap: 6px; width: 140px; letter-spacing: 0; }
.mark-grid > div { height: 42px; border: 1px solid #d0d0d0; display: flex; flex-direction: column; align-items: center; padding: 6px 1px 0 0; gap: 4px; line-height: 13px; font-size: 9px; color: #222; }
.mark-grid svg, .encodings svg { width: 16px; height: 16px; }
.encodings { margin-top: 15px; display: grid; gap: 3px; }
.encodings div { display: flex; align-items: center; padding-left: 6px; gap: 3px; }
.pill { height: 20px; line-height: 20px; border-radius: 10px; width: 111px; padding-left: 10px; color: #fff; letter-spacing: .1px; }
.blue { background: #4996b2; }
.green { background: #00b180; letter-spacing: .3px; }
.wide { width: 148px; margin-left: 2px; letter-spacing: .3px; }

.sheet { display: flex; flex-direction: column; gap: 6px; }
.shelf { height: 28px; flex: none; border: 1px solid #d0d0d0; background: #fafafa; display: flex; align-items: center; }
.shelf-name { width: 125px; height: 100%; border-right: 1px solid #d0d0d0; display: flex; align-items: center; padding: 0 0 1px 6px; gap: 7px; color: #555; letter-spacing: -.05px; }
.view-row { display: flex; gap: 6px; align-items: flex-start; }
.view { width: 813px; height: 511px; background: #fff; border: 1px solid #b2b2b2; padding: 12px 9px; }
.view h1 { font-family: "Noto Sans", sans-serif; font-size: 19px; line-height: 26px; color: #333; letter-spacing: -.06px; padding-left: 1px; }
.chart { width: 241px; margin-top: 13px; border-bottom: 1px solid #c8c8c8; color: #333; }
.chart-head { height: 16px; line-height: 14px; padding-left: 6px; border-bottom: 1px solid #c8c8c8; letter-spacing: .3px; margin-bottom: -1px; }
.chart-row { height: 160px; display: flex; align-items: center; padding-left: 6px; font-size: 12px; }
.chart-row span { width: 114px; font-variant-numeric: tabular-nums; letter-spacing: -.38px; }
.pie { width: 80px; height: 80px; border-radius: 50%; }
.normal { background: #f58e2d; }
.member { background: #4e79a7; }
.legends { display: grid; gap: 6px; }
.legend { width: 154px; height: 72px; background: #fff; border: 1px solid #d0d0d0; color: #666; }
.legend h4 { height: 29px; line-height: 30px; padding-left: 6px; font-weight: 400; font-size: 12px; background: #fafafa; color: #444; letter-spacing: -.13px; }
.legend > div { height: 20px; display: flex; align-items: center; padding-left: 3px; gap: 5px; }
.sizes > div { gap: 4px; letter-spacing: -.35px; font-variant-numeric: tabular-nums; }
.swatch { width: 14px; height: 14px; }

.sheet-tabs { display: grid; grid-template-columns: 130px 50px 157px 84px 148px 200px 176px 65px 65px 65px 65px 64px 32px 32px 33px; background: #e6e6e6; border-top: 1px solid #c4c4c4; border-bottom: 1px solid #c4c4c4; color: #666; letter-spacing: -.16px; }
.sheet-tabs > div { border-left: 1px solid #c4c4c4; display: flex; align-items: center; padding-left: 5px; gap: 4px; overflow: hidden; }
.sheet-tabs > .t-source { padding-left: 9px; gap: 6px; border: 0; }
.sheet-tabs > .t-cut { padding-left: 0; letter-spacing: -.4px; }
.sheet-tabs > .t-icon { padding-left: 7px; }
.sheet-tabs .active { background: #fafafa; color: #333; font-weight: 600; letter-spacing: .35px; }
.sheet-tabs > .t-new { padding-left: 9px; }

.status { display: grid; grid-template-columns: 59px 116px 821px 127px 27px 27px 47px 71px 1fr; align-items: center; padding-left: 3px; background: #ebebeb; border-bottom: 1px solid #aaa; font-size: 11.100px; line-height: 14px; }
.s-sum { letter-spacing: -.05px; }
.user, .pager, .views, .cell { display: flex; align-items: center; height: 20px; border-left: 1px solid #ccc; padding-bottom: 1px; }
.user { padding-left: 6px; gap: 9px; font-size: 10.800px; }
.pager { padding-left: 8px; }
.views { padding-left: 8px; }

.taskbar { display: flex; background: #dadada; font-family: "Open Sans", sans-serif; }
.widget { width: 209px; padding: 11px 0 0 20px; position: relative; }
.widget b { position: absolute; left: 31px; top: 6px; width: 16px; height: 16px; border-radius: 50%; background: #c42b1c; color: #fff; font-size: 10px; line-height: 16px; text-align: center; font-weight: 400; }
.apps { display: flex; }
.apps > div { width: 44px; position: relative; display: grid; justify-content: center; padding-top: 11px; align-content: start; }
.apps svg { width: 24px; height: 24px; }
.apps .avatar { position: absolute; left: 22px; top: 6px; width: 17px; height: 17px; }
.run::after { content: ""; position: absolute; left: 19px; top: 39px; width: 6px; height: 3px; border-radius: 2px; background: #777; }
.current, .alert { z-index: 0; }
.current::before, .alert::before { content: ""; position: absolute; z-index: -1; left: 3px; top: 4px; width: 38px; height: 38px; border-radius: 4px; background: #ececec; }
.alert::before { left: 2px; top: 3px; width: 40px; height: 40px; background: #e9aca8; }
.current::after { left: 14px; width: 16px; background: #0878d4; }
.alert::after { background: #c42b1c; }
.tile { background: #fff; width: 24px; height: 24px; box-shadow: 1px 1px 1px #bbb; }
.alert b { position: absolute; left: 23px; top: 11px; width: 17px; height: 11px; border-radius: 3px; background: #f33; color: #fff; font-size: 8.500px; line-height: 11px; font-weight: 400; text-align: center; }
.tray { display: flex; align-items: center; flex: 1; color: #111; font-size: 11.500px; line-height: 15px; letter-spacing: -.1px; }
.chev { margin-left: 69px; }
.lang { width: 30px; margin-left: 17px; margin-right: 15px; text-align: center; }
.wifi { margin-right: 8px; }
.vol { margin-right: 8px; }
.clock { width: 68px; margin-left: 3px; text-align: right; letter-spacing: .1px; }
.bell { margin-left: 8px; }

.watermark { position: absolute; left: 1073px; top: 642px; color: rgba(130,130,130,.6); font-family: "Open Sans", sans-serif; }
.watermark p { font-size: 18.500px; line-height: 24px; letter-spacing: .33px; }
.watermark span { display: block; font-size: 14px; line-height: 22px; letter-spacing: .18px; }
```
